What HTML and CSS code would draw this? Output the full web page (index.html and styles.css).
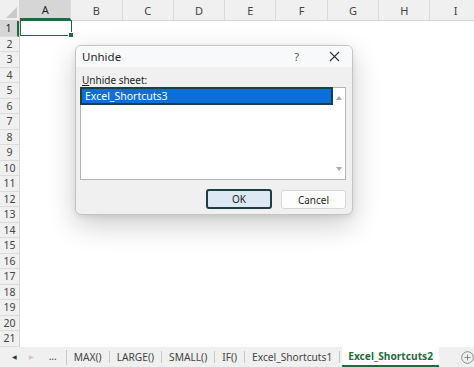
FILE: index.html
```html
<!DOCTYPE html>
<html lang="en">
<head>
    <meta charset="UTF-8">
    <meta name="viewport" content="width=device-width, initial-scale=1.0">
    <title>Unhide</title>
    <link rel="stylesheet" href="styles.css">
</head>
<body>
    <div class="sheet">
        <div class="col-heads">
            <div class="corner"><span class="tri"></span></div>
            <div class="col sel">A</div>
            <div class="col">B</div>
            <div class="col">C</div>
            <div class="col">D</div>
            <div class="col">E</div>
            <div class="col">F</div>
            <div class="col">G</div>
            <div class="col">H</div>
            <div class="col">I</div>
        </div>
        <div class="grid-body">
            <div class="row-heads">
                <div class="row sel">1</div>
                <div class="row">2</div>
                <div class="row">3</div>
                <div class="row">4</div>
                <div class="row">5</div>
                <div class="row">6</div>
                <div class="row">7</div>
                <div class="row">8</div>
                <div class="row">9</div>
                <div class="row">10</div>
                <div class="row">11</div>
                <div class="row">12</div>
                <div class="row">13</div>
                <div class="row">14</div>
                <div class="row">15</div>
                <div class="row">16</div>
                <div class="row">17</div>
                <div class="row">18</div>
                <div class="row">19</div>
                <div class="row">20</div>
                <div class="row">21</div>
            </div>
            <div class="cells">
                <div class="active-cell"><span class="handle"></span></div>
            </div>
        </div>
    </div>

    <div class="tabs">
        <span class="nav">&#9664;</span>
        <span class="nav off">&#9654;</span>
        <span class="more">...</span>
        <span class="tab">MAX()</span>
        <span class="tab">LARGE()</span>
        <span class="tab">SMALL()</span>
        <span class="tab">IF()</span>
        <span class="tab">Excel_Shortcuts1</span>
        <span class="tab active">Excel_Shortcuts2</span>
        <span class="add">
            <svg width="13" height="13" viewBox="0 0 13 13">
                <circle cx="6.5" cy="6.5" r="5.8" fill="none" stroke="#8a8a8a" stroke-width="1"/>
                <path d="M6.5 3.5v6M3.5 6.5h6" stroke="#8a8a8a" stroke-width="1"/>
            </svg>
        </span>
    </div>

    <div class="dialog">
        <div class="title-bar">
            <span class="title">Unhide</span>
            <span class="help">?</span>
            <svg class="close" width="11" height="11" viewBox="0 0 11 11">
                <path d="M1 1l9 9M10 1l-9 9" stroke="#333" stroke-width="1.1"/>
            </svg>
        </div>
        <div class="dlg-body">
            <div class="label"><u>U</u>nhide sheet:</div>
            <div class="listbox">
                <div class="items">
                    <div class="item selected">Excel_Shortcuts3</div>
                </div>
                <div class="scroll">
                    <span class="arr up"></span>
                    <span class="arr down"></span>
                </div>
            </div>
            <div class="buttons">
                <button class="btn ok">OK</button>
                <button class="btn">Cancel</button>
            </div>
        </div>
    </div>
</body>
</html>
```

FILE: styles.css
```css
body {
    margin: 0;
    width: 474px;
    height: 367px;
    overflow: hidden;
    background: #fff;
    font-family: "Noto Sans", "Open Sans", sans-serif;
    color: #444;
    position: relative;
}
.sheet {
    height: 347px;
    overflow: hidden;
}
.col-heads {
    display: flex;
    height: 21px;
    background: #f0f0f0;
    border-bottom: 1px solid #d4d4d4;
    box-sizing: border-box;
}
.corner {
    width: 20px;
    flex: none;
    position: relative;
    border-right: 1px solid #d4d4d4;
    box-sizing: border-box;
}
.corner .tri {
    position: absolute;
    right: 2px;
    bottom: 2px;
    width: 0;
    height: 0;
    border-left: 11px solid transparent;
    border-bottom: 11px solid #c9c9c9;
}
.col {
    width: 51.3px;
    flex: none;
    font-size: 11px;
    line-height: 21px;
    text-align: center;
    border-right: 1px solid #dadada;
    box-sizing: border-box;
}
.col.sel {
    background: #d6d6d6;
    border-bottom: 2px solid #1d6b3f;
    line-height: 19px;
    color: #1e1e1e;
}
.grid-body {
    display: flex;
}
.row-heads {
    width: 20px;
    flex: none;
    background: #f0f0f0;
    border-right: 1px solid #d4d4d4;
    box-sizing: border-box;
}
.row {
    height: 15.5px;
    font-size: 10.5px;
    line-height: 15px;
    text-align: center;
    border-bottom: 1px solid #dcdcdc;
    box-sizing: border-box;
}
.row.sel {
    background: #d6d6d6;
    border-right: 2px solid #1d6b3f;
    color: #1e1e1e;
}
.cells {
    flex: 1;
    background: #fff;
}
.active-cell {
    width: 52px;
    height: 16px;
    border: 1.5px solid #1d6b3f;
    box-sizing: border-box;
    margin-top: -1px;
    position: relative;
}
.handle {
    position: absolute;
    right: -3px;
    bottom: -3px;
    width: 4px;
    height: 4px;
    background: #1d6b3f;
    border: 1px solid #fff;
}

/* sheet tabs */
.tabs {
    display: flex;
    align-items: center;
    height: 20px;
    background: #f0f0f0;
    font-size: 10.2px;
    color: #444;
}
.nav {
    font-size: 6px;
    width: 18px;
    text-align: center;
    color: #333;
}
.nav:first-child {
    margin-left: 6px;
}
.nav.off {
    color: #c8c8c8;
}
.more {
    width: 28px;
    text-align: center;
    padding-bottom: 3px;
    border-right: 1px solid #c8c8c8;
    line-height: 12px;
}
.tab {
    padding: 0 7px;
    line-height: 12px;
    border-right: 1px solid #c8c8c8;
}
.tab.active {
    align-self: stretch;
    line-height: 19px;
    background: #fff;
    color: #1d6b3f;
    font-weight: bold;
    border-right: none;
    margin-left: 2px;
    padding: 0 6px;
    box-shadow: inset 0 -2px 0 #1d6b3f;
}
.add {
    margin-left: 22px;
    display: flex;
}

/* dialog */
.dialog {
    position: absolute;
    left: 75px;
    top: 45px;
    width: 278px;
    height: 170px;
    box-sizing: border-box;
    border: 1px solid #c4c4c4;
    border-radius: 6px;
    background: #f0f0f0;
    box-shadow: 0 10px 28px rgba(0, 0, 0, 0.2), 0 2px 6px rgba(0, 0, 0, 0.08);
    color: #1e1e1e;
    overflow: hidden;
}
.title-bar {
    display: flex;
    align-items: center;
    height: 21px;
    padding: 0 12px 0 6px;
    background: #f7f9fb;
}
.title {
    flex: 1;
    font-size: 11.5px;
}
.help {
    font-size: 11px;
    color: #555;
    margin-right: 30px;
}
.dlg-body {
    padding: 7px 6px 0 4px;
}
.label {
    font-size: 10px;
    line-height: 12px;
    margin-left: 2px;
}
.listbox {
    display: flex;
    height: 93px;
    background: #fff;
    border: 1px solid #b4b4b4;
    box-sizing: border-box;
    margin-top: 1px;
}
.items {
    flex: 1;
}
.item {
    font-size: 10.5px;
    line-height: 14px;
    padding: 0 3px;
}
.item.selected {
    background: #0a6fd8;
    color: #fff;
    border: 2px solid #1d3f42;
    margin: -1px 0 0 -1px;
}
.scroll {
    width: 12px;
    display: flex;
    flex-direction: column;
    justify-content: space-between;
    align-items: center;
    padding: 8px 0 8px;
}
.arr {
    width: 0;
    height: 0;
    border-left: 3.5px solid transparent;
    border-right: 3.5px solid transparent;
}
.arr.up {
    border-bottom: 4px solid #a8a8a8;
}
.arr.down {
    border-top: 4px solid #a8a8a8;
}
.buttons {
    display: flex;
    justify-content: flex-end;
    gap: 9px;
    margin-top: 10px;
}
.btn {
    font-family: inherit;
    font-size: 10px;
    width: 65px;
    height: 19px;
    background: #fdfdfd;
    border: 1px solid #d8d8d8;
    border-radius: 3px;
    color: #1e1e1e;
    padding: 0;
}
.btn.ok {
    width: 66px;
    height: 20px;
    background: #dce8f3;
    border: 2px solid #1d3f42;
    margin-top: -1px;
}
```
